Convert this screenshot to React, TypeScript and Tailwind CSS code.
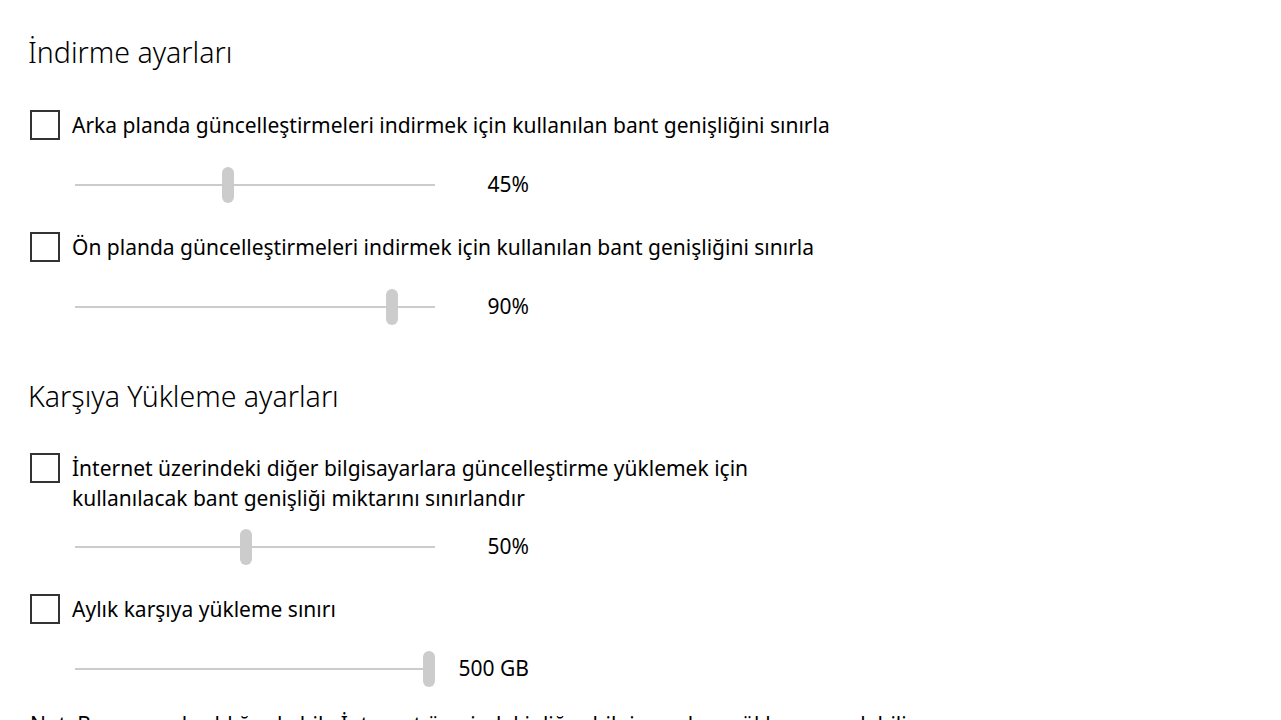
import { useState } from 'react'

type SliderProps = {
  value: number
  min: number
  max: number
  label: string
}

// Flat Windows-style slider: thin grey track, pill thumb
function FlatSlider({ value, min, max, label }: SliderProps) {
  const pct = (value - min) / (max - min)
  return (
    <div className="flex items-center h-[40px] pl-[47px]">
      <div className="relative w-[360px] h-[40px] flex items-center">
        <div className="w-full h-[2px] bg-[#cccccc]" />
        <div
          className="absolute top-[2px] w-[12px] h-[36px] rounded-full bg-[#cccccc]"
          style={{ left: `${pct * 348}px` }}
        />
      </div>
      <div className="w-[94px] text-right text-black">{label}</div>
    </div>
  )
}

function Box({ text }: { text: React.ReactNode }) {
  const [on, setOn] = useState(false)
  return (
    <label className="flex items-start pl-[2px] cursor-default">
      <span
        onClick={() => setOn(!on)}
        className="shrink-0 w-[30px] h-[30px] border-2 border-[#333333] bg-white"
      />
      <span className="ml-[12px] leading-[30px] text-black">{text}</span>
    </label>
  )
}

export default function App() {
  return (
    <div
      className="min-h-screen bg-white pl-[28px] pt-[30px] text-[21px] text-black overflow-hidden"
      style={{ fontFamily: '"Noto Sans", "Open Sans", sans-serif' }}
    >
      <h2 className="text-[28.5px] leading-[44px] font-light">İndirme ayarları</h2>

      <div className="mt-[36px]">
        <Box text="Arka planda güncelleştirmeleri indirmek için kullanılan bant genişliğini sınırla" />
      </div>
      <div className="mt-[25px]">
        <FlatSlider value={45} min={5} max={100} label="45%" />
      </div>

      <div className="mt-[27px]">
        <Box text="Ön planda güncelleştirmeleri indirmek için kullanılan bant genişliğini sınırla" />
      </div>
      <div className="mt-[25px]">
        <FlatSlider value={90} min={5} max={100} label="90%" />
      </div>

      <h2 className="mt-[47px] text-[28.5px] leading-[44px] font-light">Karşıya Yükleme ayarları</h2>

      <div className="mt-[35px]">
        <Box
          text={
            <>
              İnternet üzerindeki diğer bilgisayarlara güncelleştirme yüklemek için
              <br />
              kullanılacak bant genişliği miktarını sınırlandır
            </>
          }
        />
      </div>
      <div className="mt-[14px]">
        <FlatSlider value={50} min={5} max={100} label="50%" />
      </div>

      <div className="mt-[27px]">
        <Box text="Aylık karşıya yükleme sınırı" />
      </div>
      <div className="mt-[25px]">
        <FlatSlider value={500} min={5} max={500} label="500 GB" />
      </div>

      <p className="mt-[20px] pl-[2px] leading-[30px] whitespace-nowrap">
        Not: Bu sınıra ulaşıldığında bile İnternet üzerindeki diğer bilgisayarlara yükleme yapılabilir.
      </p>
    </div>
  )
}
